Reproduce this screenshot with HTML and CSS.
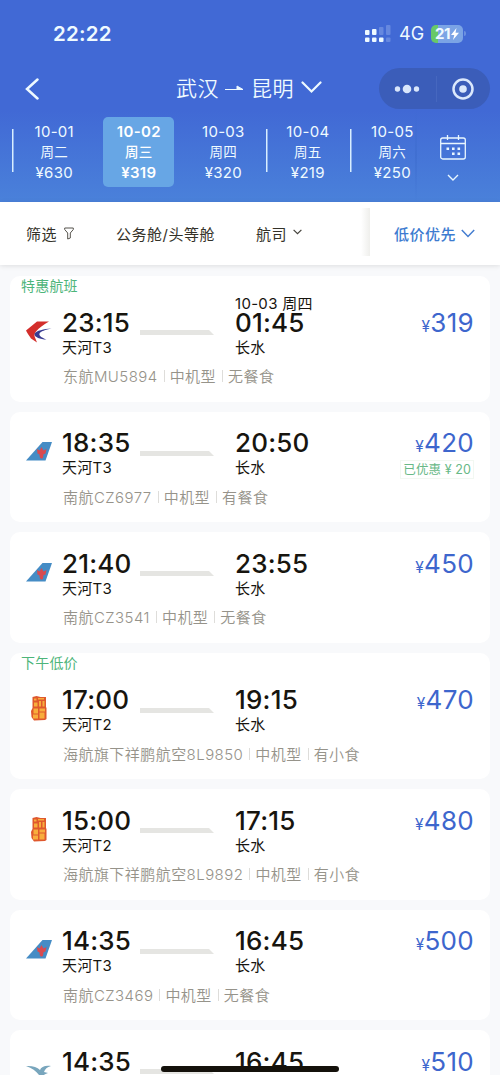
FILE: index.html
```html
<!DOCTYPE html>
<html lang="zh-CN">
<head>
<meta charset="utf-8">
<title>武汉 - 昆明</title>
<link rel="stylesheet" href="styles.css">
</head>
<body>
<svg class="defs" width="0" height="0">
  <symbol id="eastern" viewBox="0 0 26 22"><path d="M23 .5H11L0 9.500c1 2 3 5 5 8l6 4-2-5c-1-2-.5-4 1-6 3-4 8-7 13-10Z" fill="#d32e2b"/><path d="M25.500 7.500C18 8 10 9.500 8.500 13c-.5 3 6 5.500 12 5.500-4-1.500-8-3.500-7-6 1-2 6-4 12-5Z" fill="#383b91"/></symbol>
  <symbol id="southern" viewBox="0 0 26 20"><path d="M0 19.500 16.500 1H26l-6.500 18.500Z" fill="#458cc5"/><path d="M11 8l2.500 1.500L15.500 6l2 3.500L20.500 8l-1 4.500-2 .8-.5 3.500-1.500 1-1.500-1-.7-3.500-1.800-.8Z" fill="#d84a50"/></symbol>
  <symbol id="lucky" viewBox="0 0 16 25"><path d="M1.500 1l4-1 4 1h5.500v10l.5 1v11l-1.500 1-11 .5L.5 21 0 15l1.500-3Z" fill="#df582d"/><path d="M3 2.500h2.500v2H3zM7 2h6v1.500H7zM3 6.500h3.500v4H3zM8 5h2v5.500H8zM11.500 5h2v5.500h-2zM2.500 12.500H7v5H2.500zM8.500 12.500H14v3H8.500zM2 18.500h5v4H2zM8.500 16.500h5v6h-5z" fill="#f8ad3c"/></symbol>
  <symbol id="xiamen" viewBox="0 0 26 18"><path d="M0 1c6-.5 11 1 14 4 1-3 5-5 11-4-4 1-6 3-7 6l4 1c-3 1-5 2-5 4l3 5c-5-1-9-2-14-3 4-1 7-2 7-4C10 6 6 3 0 1Z" fill="#79a6bd"/></symbol>
  <symbol id="route" viewBox="0 0 74 6"><path d="M0 1h69l5 5H0Z" fill="#e5e5e2"/></symbol>
</svg>
<header class="header">
  <div class="status">
    <span class="clock">22:22</span>
    <svg class="signal" width="26" height="19" viewBox="0 0 26 19"><g fill="#eefaff"><rect x="0" y="6" width="4.500" height="5" rx="1"/><rect x="7" y="5" width="4.500" height="6" rx="1"/><rect x="0" y="13.500" width="4.500" height="4.500" rx="1"/><rect x="7" y="13.500" width="4.500" height="4.500" rx="1"/><rect x="14" y="13.500" width="4.500" height="4.500" rx="1"/></g><g fill="#6688df"><rect x="14" y="3" width="4.500" height="8" rx="1"/><rect x="21" y="1" width="4.500" height="10" rx="1"/><rect x="21" y="13.500" width="4.500" height="4.500" rx="1"/></g></svg>
    <span class="network">4G</span>
    <span class="battery"><b>21</b><svg width="8" height="12" viewBox="0 0 8 12"><path d="M5.500 0 0 7h3.300L2 12l6-7.200H4.500Z" fill="#fff"/></svg></span><i class="battery-tip"></i>
  </div>
  <div class="nav">
    <svg class="back" width="14" height="22" viewBox="0 0 14 22"><path d="M12.500 1.500 2 11l10.500 9.500" fill="none" stroke="#eefaff" stroke-width="2.500" stroke-linecap="round"/></svg>
    <div class="cities"><span>武汉</span><svg width="19" height="8" viewBox="0 0 19 8"><path d="M0 4.500h18L12 1v3.500Z" fill="#eefaff" stroke="#eefaff" stroke-width="1"/></svg><span>昆明</span><svg class="down" width="21" height="13" viewBox="0 0 21 13"><path d="M1.500 1.500l9 9 9-9" fill="none" stroke="#eefaff" stroke-width="2.200" stroke-linecap="round"/></svg></div>
    <div class="capsule">
      <svg width="26" height="12" viewBox="0 0 26 12"><g fill="#d9e6fb"><circle cx="3.500" cy="6" r="2.700"/><circle cx="13" cy="6" r="4.300"/><circle cx="22.500" cy="6" r="2.700"/></g></svg>
      <i></i>
      <svg width="22" height="22" viewBox="0 0 22 22"><circle cx="11" cy="11" r="9.500" fill="none" stroke="#dbe8fc" stroke-width="2.500"/><circle cx="11" cy="11" r="3.800" fill="#dbe8fc"/></svg>
    </div>
  </div>
  <div class="dates">
    <div class="days">
      <div class="day line"><span>10-01</span><span class="week">周二</span><span>¥630</span></div>
      <div class="day active"><span>10-02</span><span class="week">周三</span><span>¥319</span></div>
      <div class="day"><span>10-03</span><span class="week">周四</span><span>¥320</span></div>
      <div class="day line"><span>10-04</span><span class="week">周五</span><span>¥219</span></div>
      <div class="day line"><span>10-05</span><span class="week">周六</span><span>¥250</span></div>
    </div>
    <div class="calendar">
      <svg width="26" height="25" viewBox="0 0 26 25"><g fill="none" stroke="#e9f7ff" stroke-width="1.300"><rect x=".7" y="3" width="24.600" height="21" rx="2"/><path d="M1 8.500h24M7.500 0v5M18.500 0v5"/></g><g fill="#e9f7ff"><path d="M6.500 12.500h2.600v2.600H6.500zM12 12.500h2.600v2.600H12zM17.500 12.500h2.600v2.600h-2.600zM12 17.500h2.600v2.600H12zM17.500 17.500h2.600v2.600h-2.600z"/></g></svg>
      <svg width="12" height="8" viewBox="0 0 12 8"><path d="M1 1l5 5 5-5" fill="none" stroke="#e9f7ff" stroke-width="1.400"/></svg>
    </div>
  </div>
</header>
<div class="filters">
  <div class="options">
    <span class="option filter">筛选<svg width="10" height="13" viewBox="0 0 10 13"><path d="M.7 1h8.600v1.500L6.300 6v5l-2.600 1V6L.7 2.500Z" fill="none" stroke="#55534c" stroke-width="1"/></svg></span>
    <span class="option cabin">公务舱/头等舱</span>
    <span class="option airline">航司<svg width="9" height="6" viewBox="0 0 9 6"><path d="M.6.8l3.900 3.900L8.400.8" fill="none" stroke="#44423b" stroke-width="1.200"/></svg></span>
  </div>
  <div class="sort">低价优先<svg width="14" height="9" viewBox="0 0 14 9"><path d="M.8 1 7 7.500 13.200 1" fill="none" stroke="#447dd0" stroke-width="1.500"/></svg></div>
</div>
<main class="list">
  <section class="card tagged">
    <div class="tag">特惠航班</div>
    <div class="flight">
      <svg class="logo" width="26" height="22"><use href="#eastern"/></svg>
      <div class="stop"><b>23:15</b><span>天河T3</span></div>
      <svg class="route" width="74" height="6"><use href="#route"/></svg>
      <div class="stop"><em class="next-day">10-03 周四</em><b>01:45</b><span>长水</span></div>
      <div class="price"><div><small>¥</small>319</div></div>
    </div>
    <div class="info"><span>东航MU5894</span><span>中机型</span><span>无餐食</span></div>
  </section>
  <section class="card">
    <div class="flight">
      <svg class="logo" width="26" height="20"><use href="#southern"/></svg>
      <div class="stop"><b>18:35</b><span>天河T3</span></div>
      <svg class="route" width="74" height="6"><use href="#route"/></svg>
      <div class="stop"><b>20:50</b><span>长水</span></div>
      <div class="price"><div><small>¥</small>420</div><span class="saved">已优惠 ¥ 20</span></div>
    </div>
    <div class="info"><span>南航CZ6977</span><span>中机型</span><span>有餐食</span></div>
  </section>
  <section class="card">
    <div class="flight">
      <svg class="logo" width="26" height="20"><use href="#southern"/></svg>
      <div class="stop"><b>21:40</b><span>天河T3</span></div>
      <svg class="route" width="74" height="6"><use href="#route"/></svg>
      <div class="stop"><b>23:55</b><span>长水</span></div>
      <div class="price"><div><small>¥</small>450</div></div>
    </div>
    <div class="info"><span>南航CZ3541</span><span>中机型</span><span>无餐食</span></div>
  </section>
  <section class="card tagged">
    <div class="tag">下午低价</div>
    <div class="flight">
      <svg class="logo tall" width="16" height="25"><use href="#lucky"/></svg>
      <div class="stop"><b>17:00</b><span>天河T2</span></div>
      <svg class="route" width="74" height="6"><use href="#route"/></svg>
      <div class="stop"><b>19:15</b><span>长水</span></div>
      <div class="price"><div><small>¥</small>470</div></div>
    </div>
    <div class="info"><span>海航旗下祥鹏航空8L9850</span><span>中机型</span><span>有小食</span></div>
  </section>
  <section class="card">
    <div class="flight">
      <svg class="logo tall" width="16" height="25"><use href="#lucky"/></svg>
      <div class="stop"><b>15:00</b><span>天河T2</span></div>
      <svg class="route" width="74" height="6"><use href="#route"/></svg>
      <div class="stop"><b>17:15</b><span>长水</span></div>
      <div class="price"><div><small>¥</small>480</div></div>
    </div>
    <div class="info"><span>海航旗下祥鹏航空8L9892</span><span>中机型</span><span>有小食</span></div>
  </section>
  <section class="card">
    <div class="flight">
      <svg class="logo" width="26" height="20"><use href="#southern"/></svg>
      <div class="stop"><b>14:35</b><span>天河T3</span></div>
      <svg class="route" width="74" height="6"><use href="#route"/></svg>
      <div class="stop"><b>16:45</b><span>长水</span></div>
      <div class="price"><div><small>¥</small>500</div></div>
    </div>
    <div class="info"><span>南航CZ3469</span><span>中机型</span><span>无餐食</span></div>
  </section>
  <section class="card last">
    <div class="flight">
      <svg class="logo bird" width="26" height="18"><use href="#xiamen"/></svg>
      <div class="stop"><b>14:35</b></div>
      <svg class="route" width="74" height="6"><use href="#route"/></svg>
      <div class="stop"><b>16:45</b></div>
      <div class="price"><div><small>¥</small>510</div></div>
    </div>
  </section>
</main>
<div class="home-bar"></div>
</body>
</html>
```

FILE: styles.css
```css
* { box-sizing: border-box; }
body {
  margin: 0;
  width: 500px;
  height: 1075px;
  overflow: hidden;
  background: #f8f9fb;
  color: #17150f;
  font-family: Inter, "Noto Sans CJK SC", sans-serif;
}
svg { display: block; flex: none; }
.defs { position: absolute; }

.header {
  height: 202px;
  color: #effaff;
  background: linear-gradient(#4169d5 0, #4169d5 110px, #4a81da 202px);
}
.status { display: flex; align-items: center; height: 68px; padding: 0 0 1px 53px; }
.clock { width: 312px; font-size: 20.500px; font-weight: 600; letter-spacing: .2px; }
.network { width: 34px; margin-left: 8px; font-size: 18px; line-height: 20px; }
.battery {
  display: flex;
  align-items: center;
  justify-content: center;
  gap: 1px;
  width: 32px;
  height: 18px;
  margin-left: -2px;
  border-radius: 5px;
  background: linear-gradient(90deg, #68c967 7px, #7ba4e5 7px);
  font-size: 15px;
}
.battery b { font-weight: 700; letter-spacing: -.5px; }
.battery-tip { width: 2px; height: 5px; margin-left: 1px; border-radius: 0 2px 2px 0; background: #6b91df; }
.nav { display: flex; align-items: center; height: 41px; padding-left: 25px; }
.cities { display: flex; align-items: center; width: 203px; margin-left: 137px; font-size: 21px; font-weight: 350; line-height: 30px; letter-spacing: .5px; }
.cities svg { margin: 0 7px 0 6px; }
.cities .down { margin: -3px 0 0 7px; }
.capsule { display: flex; align-items: center; width: 111px; height: 41px; padding-left: 15px; border-radius: 21px; background: #3b5db9; }
.capsule i { width: 1px; height: 26px; margin: 0 15px 0 16px; background: #4667bf; }
.dates { display: flex; height: 93px; }
.days { display: flex; width: 417px; padding: 8px 0 0 12px; overflow: hidden; border-right: 2px solid; border-image: linear-gradient(transparent, #3867c866, transparent) 1; }
.day { display: flex; flex: 0 0 84.500px; flex-direction: column; align-items: center; height: 70px; padding-top: 5px; font-size: 15px; line-height: 20.500px; letter-spacing: .3px; }
.day .week { font-size: 13.500px; margin-top: -1px; margin-bottom: 1px; }
.day.line { background: linear-gradient(#d8eeff, #d8eeff) 0 12px / 1.500px 43px no-repeat; }
.day.active { flex-basis: 71px; margin: 0 6.800px; border-radius: 5px; background: #67a6e5; color: #fff; font-weight: 600; }
.active .week { font-weight: 500; }
.calendar { display: flex; flex-direction: column; align-items: center; width: 26px; margin-left: 23px; padding-top: 26px; gap: 14px; }

.filters { display: flex; position: relative; height: 63px; background: #fff; box-shadow: 0 1px 5px #0000001c; color: #343229; font-size: 15px; letter-spacing: .5px; }
.options { display: flex; width: 370px; padding-left: 26px; background: linear-gradient(90deg, transparent 361px, #efefec 370px) 0 6px / 100% 48px no-repeat; }
.option { display: flex; align-items: center; }
.filter { width: 90px; gap: 7px; }
.cabin { width: 140px; }
.airline { gap: 6px; }
.airline svg { margin-top: -3px; }
.sort { display: flex; align-items: center; width: 130px; padding-left: 24px; background: #fff; color: #3d7bd0; gap: 5px; font-weight: 500; }

.list { display: flex; flex-direction: column; gap: 10px; height: 810px; padding: 10.500px 10px 0; overflow: hidden; }
.card { flex: none; height: 110.600px; padding: 17.500px 16px 0; border-radius: 10px; background: #fff; }
.card.tagged { height: 126.300px; padding-top: 0; }
.card.last { height: 45px; border-radius: 10px 10px 0 0; overflow: hidden; }
.tag { height: 33.300px; margin-left: -5px; color: #4db57a; font-size: 14px; line-height: 20.500px; letter-spacing: .2px; }
.flight { display: grid; grid-template-columns: 25px 67px 74px 120px 1fr; column-gap: 11px; height: 56px; }
.logo { margin-top: 12px; justify-self: center; }
.logo.tall { margin-top: 10px; }
.logo.bird { margin-top: 17px; }
.route { margin-top: 20.500px; }
.stop { display: flex; position: relative; flex-direction: column; white-space: nowrap; }
.route + .stop { margin-left: 10px; }
.stop b { font-size: 26px; font-weight: 450; line-height: 28px; letter-spacing: .2px; }
.stop span { font-size: 15px; line-height: 22px; letter-spacing: .3px; }
.next-day { position: absolute; left: 0; top: -15px; font-size: 15px; font-style: normal; line-height: 20px; letter-spacing: .3px; }
.price { display: flex; flex-direction: column; align-items: flex-end; color: #3d66cd; font-size: 26px; line-height: 28px; letter-spacing: .3px; white-space: nowrap; }
.price small { font-size: 15.500px; }
.saved { color: #68b987; margin-top: -1.500px; padding: 0 2px; border: 1px solid #f2f8f2; font-size: 12.500px; line-height: 17px; letter-spacing: .1px; }
.info { display: flex; align-items: center; margin-left: 37px; height: 22px; color: #96938a; font-size: 15px; font-weight: 350; letter-spacing: .45px; white-space: nowrap; }
.info span + span { margin-left: 6px; padding-left: 6px; background: linear-gradient(#deddda, #deddda) 0 55% / 1px 12px no-repeat; }
.home-bar { position: absolute; left: 161px; top: 1066px; width: 178px; height: 6px; border-radius: 3px; background: #14110b; }
```
